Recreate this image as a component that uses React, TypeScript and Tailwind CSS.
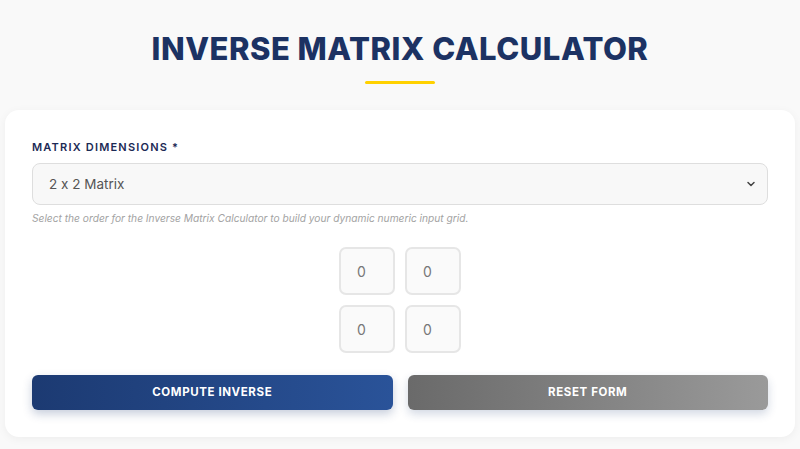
import { useState } from 'react';

const FONT = {
  fontFamily: 'Inter, "Noto Sans", "Liberation Sans", sans-serif',
  fontFeatureSettings: '"calt" 0',
};

export default function App() {
  const [size, setSize] = useState(2);
  const [cells, setCells] = useState<string[]>(Array(4).fill(''));

  const changeSize = (n: number) => {
    setSize(n);
    setCells(Array(n * n).fill(''));
  };

  return (
    <div className="min-h-[449px] bg-[#f9f9f9] px-[5px] pt-[30px]" style={FONT}>
      {/* Titulo */}
      <h1 className="text-center text-[31px] leading-[38px] font-extrabold tracking-[0.5px] text-[#1c3263]">
        INVERSE MATRIX CALCULATOR
      </h1>
      <div className="mx-auto mt-[13px] h-[3px] w-[70px] rounded-full bg-[#ffd100]" />

      {/* Tarjeta */}
      <div className="mt-[26px] rounded-[14px] bg-white px-[27px] pt-[31px] pb-[27px] shadow-[0_2px_10px_rgba(0,0,0,0.05)]">
        <label className="block text-[11px] leading-[13px] font-semibold tracking-[1.2px] text-[#1c2a55]">
          MATRIX DIMENSIONS *
        </label>
        <div className="relative mt-[9px]">
          <select
            value={size}
            onChange={e => changeSize(Number(e.target.value))}
            className="h-[42px] w-full appearance-none rounded-[8px] border border-[#dedede] bg-[#f8f8f8] pl-[16px] text-[13.5px] text-[#555] outline-none"
          >
            <option value={2}>2 x 2 Matrix</option>
            <option value={3}>3 x 3 Matrix</option>
            <option value={4}>4 x 4 Matrix</option>
          </select>
          <svg
            className="pointer-events-none absolute right-[12px] top-1/2 -translate-y-1/2"
            width="10" height="10" viewBox="0 0 10 10" fill="none"
          >
            <path d="M2 3.5l3 3 3-3" stroke="#444" strokeWidth="1.5" strokeLinecap="round" strokeLinejoin="round" />
          </svg>
        </div>
        <p className="mt-[6px] text-[10.2px] italic text-[#a3a3a3]">
          Select the order for the Inverse Matrix Calculator to build your dynamic numeric input grid.
        </p>

        {/* Grilla */}
        <div
          className="mx-auto mt-[21px] grid w-fit gap-[10px]"
          style={{ gridTemplateColumns: `repeat(${size}, 56px)` }}
        >
          {cells.map((v, i) => (
            <input
              key={i}
              value={v}
              placeholder="0"
              onChange={e => setCells(prev => prev.map((c, j) => (j === i ? e.target.value : c)))}
              className="h-[48px] w-[56px] rounded-[7px] border-2 border-[#e6e6e6] bg-[#fafafa] pl-[16px] text-[14px] text-[#555] outline-none placeholder:text-[#777]"
            />
          ))}
        </div>

        {/* Botones */}
        <div className="mt-[22px] grid grid-cols-2 gap-[15px]">
          <button className="h-[35px] rounded-[6px] bg-gradient-to-r from-[#1c3a72] to-[#2a5399] text-[11.5px] font-bold tracking-[0.6px] text-white shadow-[0_4px_10px_rgba(30,58,114,0.25)]">
            COMPUTE INVERSE
          </button>
          <button
            onClick={() => setCells(Array(size * size).fill(''))}
            className="h-[35px] rounded-[6px] bg-gradient-to-r from-[#6a6a6a] to-[#9a9a9a] text-[11.5px] font-bold tracking-[0.6px] text-white shadow-[0_4px_10px_rgba(30,58,114,0.2)]"
          >
            RESET FORM
          </button>
        </div>
      </div>
    </div>
  );
}
